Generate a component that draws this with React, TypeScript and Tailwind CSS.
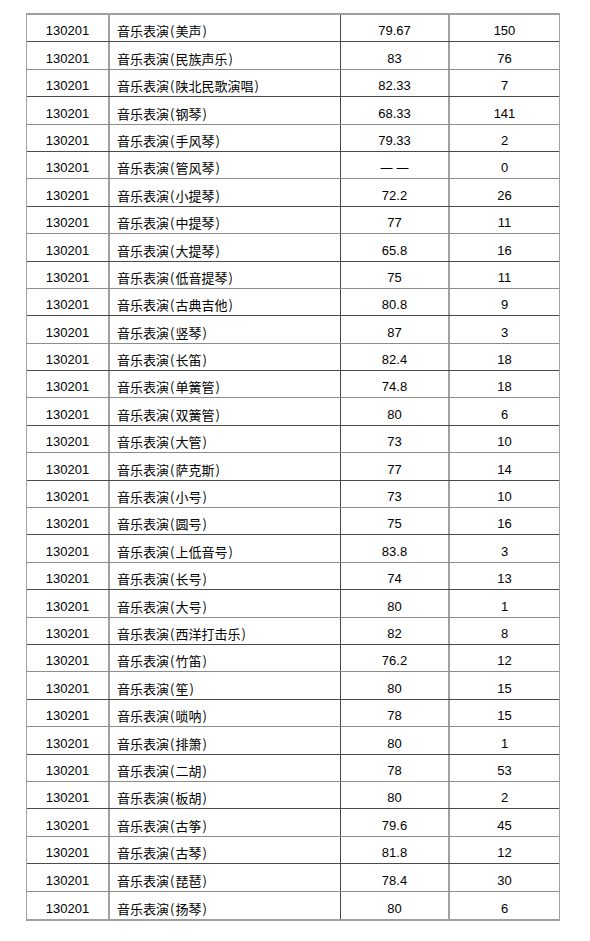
const rows: [string, string, string][] = [
  ["美声", "79.67", "150"],
  ["民族声乐", "83", "76"],
  ["陕北民歌演唱", "82.33", "7"],
  ["钢琴", "68.33", "141"],
  ["手风琴", "79.33", "2"],
  ["管风琴", "——", "0"],
  ["小提琴", "72.2", "26"],
  ["中提琴", "77", "11"],
  ["大提琴", "65.8", "16"],
  ["低音提琴", "75", "11"],
  ["古典吉他", "80.8", "9"],
  ["竖琴", "87", "3"],
  ["长笛", "82.4", "18"],
  ["单簧管", "74.8", "18"],
  ["双簧管", "80", "6"],
  ["大管", "73", "10"],
  ["萨克斯", "77", "14"],
  ["小号", "73", "10"],
  ["圆号", "75", "16"],
  ["上低音号", "83.8", "3"],
  ["长号", "74", "13"],
  ["大号", "80", "1"],
  ["西洋打击乐", "82", "8"],
  ["竹笛", "76.2", "12"],
  ["笙", "80", "15"],
  ["唢呐", "78", "15"],
  ["排箫", "80", "1"],
  ["二胡", "78", "53"],
  ["板胡", "80", "2"],
  ["古筝", "79.6", "45"],
  ["古琴", "81.8", "12"],
  ["琵琶", "78.4", "30"],
  ["扬琴", "80", "6"],
];

const font = { fontFamily: '"Liberation Sans", "Noto Sans CJK SC", sans-serif' };

export default function App() {
  return (
    <div className="w-[590px] h-[941px] bg-white pt-[13px] pl-[26px] text-black" style={font}>
      <div className="w-[534px] border border-[#a0a0a0] border-b-2 border-t-2">
        {rows.map(([name, score, count], i) => (
          <div
            key={i}
            className={`flex h-[27.4px] text-[13px] leading-[16px] ${
              i === rows.length - 1 ? "" : i % 2 === 0 ? "border-b border-[#4a4a4a]" : "border-b border-[#8c8c8c]"
            }`}
          >
            <div className="w-[83px] flex items-end justify-center pb-[2px] border-r-2 border-[#a0a0a0]">
              130201
            </div>
            <div
              className="w-[231px] flex items-end pl-[7px] pb-[2px] text-[13px] border-r border-[#4a4a4a]"
              style={{ fontFamily: '"Noto Sans CJK SC", sans-serif' }}
            >
              <span>
                音乐表演<span className="px-[1px]">(</span>
                {name}
                <span className="px-[1px]">)</span>
              </span>
            </div>
            <div className="w-[109px] flex items-end justify-center pb-[2px] border-r-2 border-[#a0a0a0]">
              {score === "——" ? (
                <span className="flex gap-[3px]" style={{ fontFamily: '"Noto Sans CJK SC", sans-serif' }}>
                  <span>一</span>
                  <span>一</span>
                </span>
              ) : (
                score
              )}
            </div>
            <div className="flex-1 flex items-end justify-center pb-[2px]">{count}</div>
          </div>
        ))}
      </div>
    </div>
  );
}
